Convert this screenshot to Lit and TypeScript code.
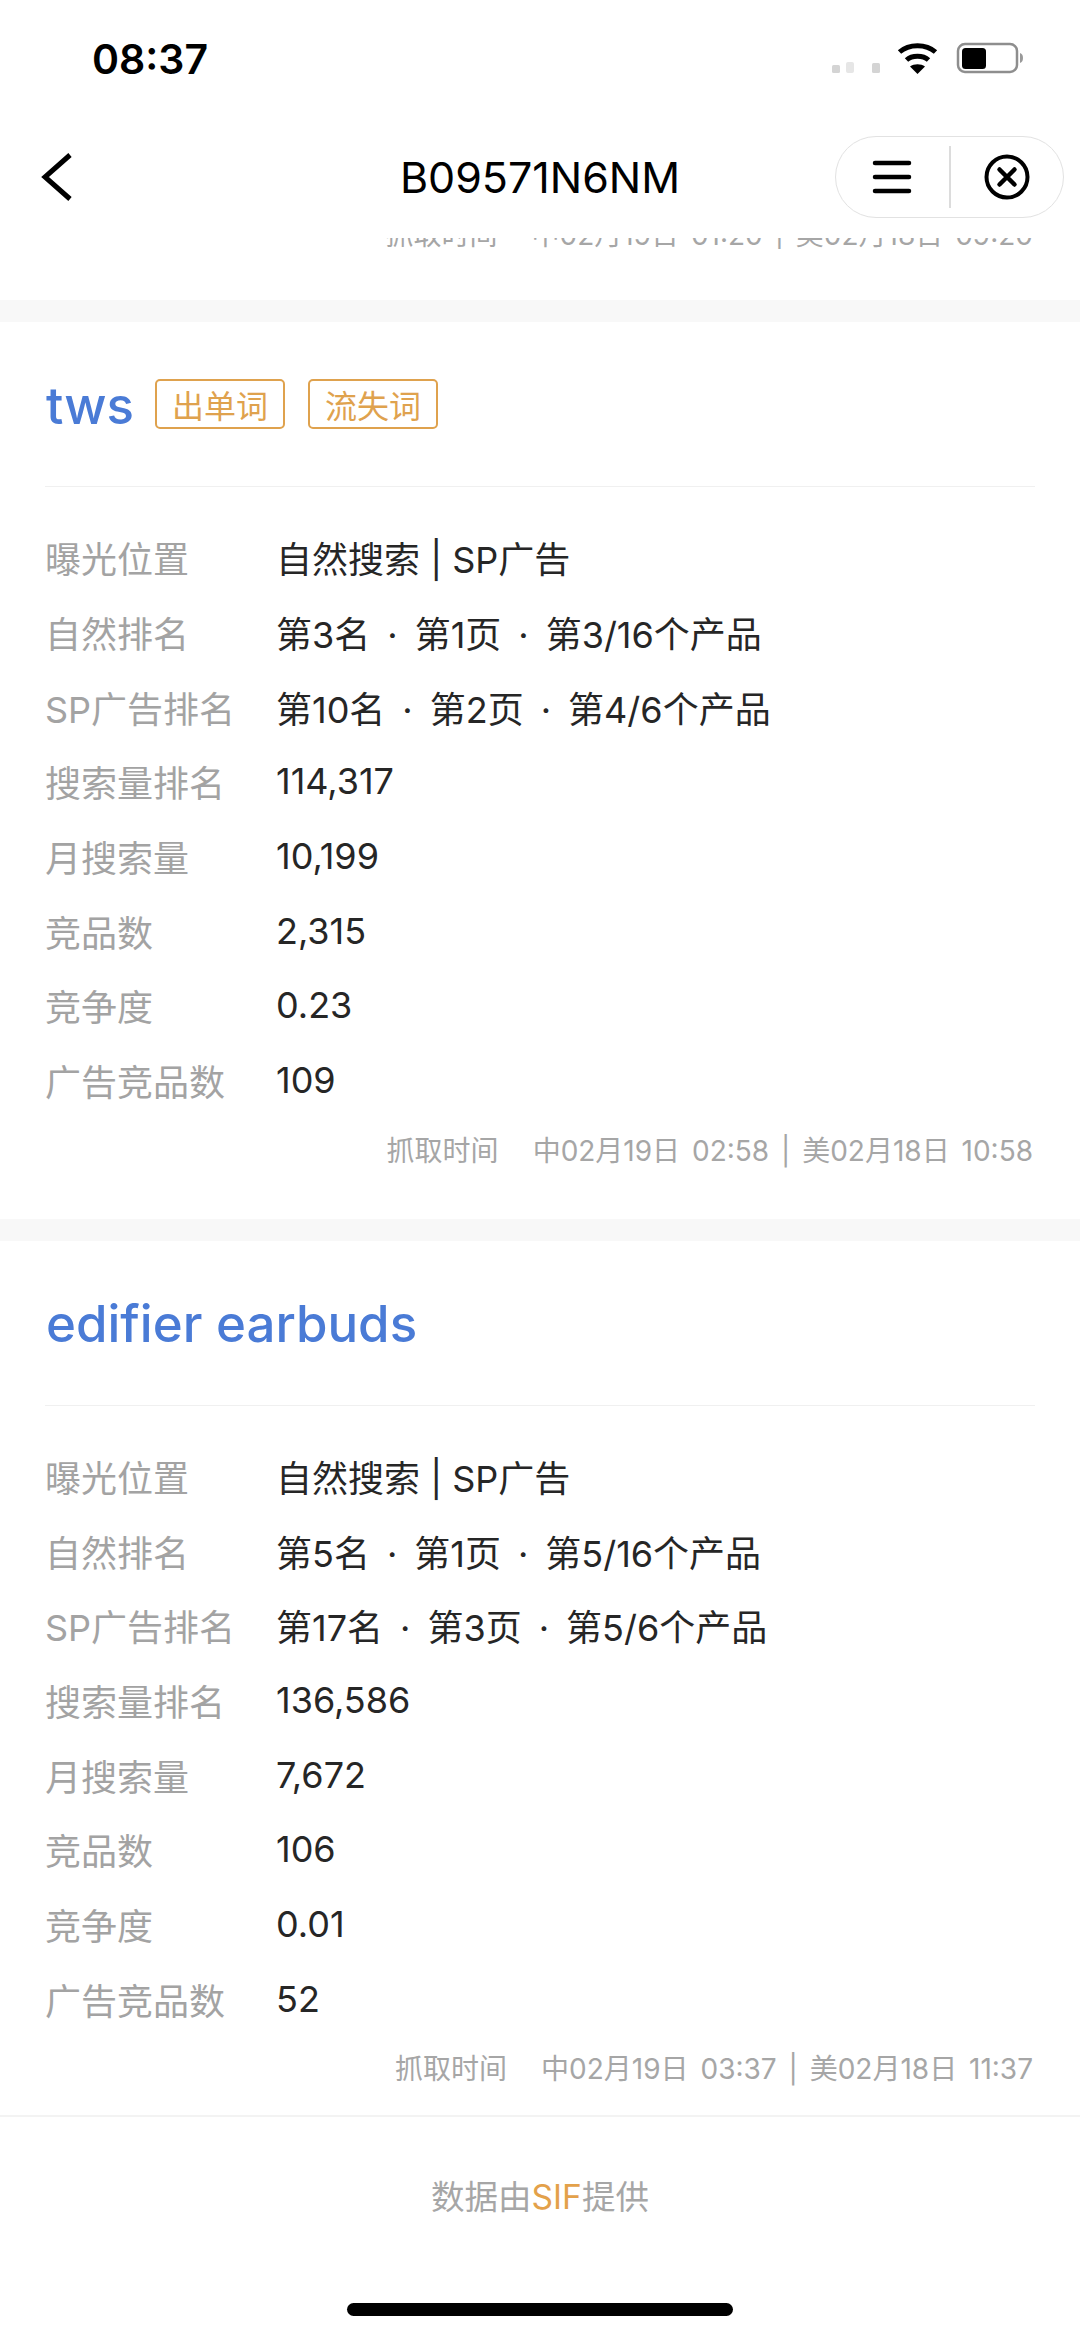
import { LitElement, html, css } from "lit";
import { customElement } from "lit/decorators.js";

type Card = {
  title: string;
  tags: string[];
  rows: [string, string][];
  time: string;
};

const cards: Card[] = [
  {
    title: "tws",
    tags: ["出单词", "流失词"],
    rows: [
      ["曝光位置", "自然搜索 | SP广告"],
      ["自然排名", "第3名 · 第1页 · 第3/16个产品"],
      ["SP广告排名", "第10名 · 第2页 · 第4/6个产品"],
      ["搜索量排名", "114,317"],
      ["月搜索量", "10,199"],
      ["竞品数", "2,315"],
      ["竞争度", "0.23"],
      ["广告竞品数", "109"],
    ],
    time: "中02月19日 02:58 | 美02月18日 10:58",
  },
  {
    title: "edifier earbuds",
    tags: [],
    rows: [
      ["曝光位置", "自然搜索 | SP广告"],
      ["自然排名", "第5名 · 第1页 · 第5/16个产品"],
      ["SP广告排名", "第17名 · 第3页 · 第5/6个产品"],
      ["搜索量排名", "136,586"],
      ["月搜索量", "7,672"],
      ["竞品数", "106"],
      ["竞争度", "0.01"],
      ["广告竞品数", "52"],
    ],
    time: "中02月19日 03:37 | 美02月18日 11:37",
  },
];

@customElement("app-root")
export class AppRoot extends LitElement {
  static styles = css`
    :host {
      display: block;
      width: 1080px;
      height: 2337px;
      background: #fff;
      font-family: Inter, "Noto Sans CJK SC", sans-serif;
      color: #1f1f1f;
    }
    .page {
      height: 2337px;
      display: flex;
      flex-direction: column;
      overflow: hidden;
    }
    .status {
      height: 118px;
      flex: none;
      display: flex;
      align-items: center;
      justify-content: space-between;
      padding: 0 50px 0 92px;
    }
    .clock {
      font-size: 41px;
      font-weight: 600;
      color: #000;
    }
    .status-icons {
      display: flex;
      align-items: center;
    }
    .nav {
      height: 118px;
      flex: none;
      display: flex;
      align-items: center;
      justify-content: center;
      position: relative;
    }
    .back {
      position: absolute;
      left: 41px;
      top: 35px;
    }
    .nav-title {
      font-size: 43px;
      color: #000;
    }
    .capsule {
      position: absolute;
      left: 835px;
      top: 18px;
      width: 229px;
      height: 82px;
      box-sizing: border-box;
      border: 1.5px solid #e2e2e2;
      border-radius: 41px;
      display: flex;
      align-items: center;
    }
    .cap-part {
      flex: 1;
      display: flex;
      align-items: center;
      justify-content: center;
      height: 62px;
    }
    .cap-part + .cap-part {
      border-left: 2px solid #dcdcdc;
    }
    .scroll {
      flex: 1;
      min-height: 0;
      overflow: hidden;
    }
    .clip {
      margin-top: 2px;
      height: 11px;
      overflow: hidden;
      display: flex;
      align-items: flex-end;
      justify-content: flex-end;
      padding-right: 47px;
    }
    .clip .time {
      padding: 0;
      flex: none;
    }
    .clip-gap {
      height: 51px;
    }
    .band {
      height: 22px;
      background: #f8f8f8;
    }
    .head {
      height: 165px;
      box-sizing: border-box;
      display: flex;
      align-items: center;
      margin: 0 45px;
      border-bottom: 1.5px solid #f0f0f0;
    }
    .title {
      font-size: 51px;
      font-weight: 500;
      color: #4a7bd6;
      margin: 2px 0 0 1px;
    }
    .tags {
      display: flex;
      gap: 23px;
      margin-left: 21px;
    }
    .tag {
      box-sizing: border-box;
      width: 130px;
      height: 50px;
      border: 2px solid #dfa24e;
      border-radius: 5px;
      color: #dfa24e;
      font-size: 32px;
      display: flex;
      align-items: center;
      justify-content: center;
    }
    .rows {
      padding: 33px 45px 0;
    }
    .row {
      height: 74.7px;
      display: flex;
      align-items: center;
      font-size: 36px;
    }
    .label {
      width: 231px;
      flex: none;
      color: #a3a3a3;
    }
    .value {
      color: #262626;
    }
    .dot {
      margin: 0 17px;
    }
    .time {
      display: flex;
      justify-content: flex-end;
      gap: 34px;
      color: #a6a6a6;
      font-size: 28px;
      line-height: 28px;
      word-spacing: 4px;
      padding: 19px 47px 54px 0;
      white-space: nowrap;
    }
    .footer {
      flex: none;
      height: 222px;
      box-sizing: border-box;
      border-top: 2px solid #f3f3f3;
      display: flex;
      flex-direction: column;
      align-items: center;
      position: relative;
    }
    .credit {
      margin-top: 53px;
      font-size: 33.5px;
      color: #a6a6a6;
    }
    .credit b {
      font-weight: 400;
      color: #e3a14a;
    }
    .home {
      position: absolute;
      left: 347px;
      top: 186px;
      width: 386px;
      height: 13px;
      border-radius: 7px;
      background: #000;
    }
  `;

  private renderValue(v: string) {
    const parts = v.split(" · ");
    return parts.map((p, i) =>
      i === 0 ? p : html`<span class="dot">·</span>${p}`
    );
  }

  private renderTime(t: string) {
    return html`<div class="time"><span>抓取时间</span><span>${t}</span></div>`;
  }

  private renderCard(c: Card) {
    return html`
      <div class="band"></div>
      <section>
        <div class="head">
          <span class="title">${c.title}</span>
          ${c.tags.length
            ? html`<div class="tags">${c.tags.map((t) => html`<span class="tag">${t}</span>`)}</div>`
            : null}
        </div>
        <div class="rows">
          ${c.rows.map(
            ([k, v]) => html`<div class="row">
              <span class="label">${k}</span>
              <span class="value">${this.renderValue(v)}</span>
            </div>`
          )}
        </div>
        ${this.renderTime(c.time)}
      </section>
    `;
  }

  render() {
    return html`
      <div class="page">
        <div class="status">
          <span class="clock">08:37</span>
          <div class="status-icons">
            <svg width="200" height="40" viewBox="0 0 200 40">
              <rect x="2" y="26" width="8" height="8" rx="1.5" fill="#d4d4d4"></rect>
              <rect x="16" y="23" width="8" height="11" rx="2" fill="#e6e6e6"></rect>
              <rect x="42" y="24" width="8" height="10" rx="1.5" fill="#d4d4d4"></rect>
              <g fill="none" stroke="#000" stroke-width="5">
                <path d="M69.500 13 C79 4.500 96 4.500 105.500 13"></path>
                <path d="M76.500 21 C82 16 93 16 98.500 21"></path>
              </g>
              <path d="M87.500 35 L80 27.500 C84 24.500 91 24.500 95 27.500 Z" fill="#000"></path>
              <rect x="128" y="5" width="59" height="28" rx="7" fill="#fff" stroke="#8e8e8e" stroke-width="2.500"></rect>
              <rect x="132" y="9" width="24" height="21" rx="3.500" fill="#000"></rect>
              <path d="M190 14 C194 15 194 23 190 24 Z" fill="#999"></path>
            </svg>
          </div>
        </div>
        <div class="nav">
          <svg class="back" width="32" height="48" viewBox="0 0 32 48">
            <path d="M29 2 L4 24 L29 46" fill="none" stroke="#000" stroke-width="5"></path>
          </svg>
          <span class="nav-title">B09571N6NM</span>
          <div class="capsule">
            <div class="cap-part">
              <svg width="40" height="34" viewBox="0 0 40 34">
                <g stroke="#000" stroke-width="4.500" stroke-linecap="round">
                  <path d="M3 3 H37"></path>
                  <path d="M3 17 H37"></path>
                  <path d="M3 31 H37"></path>
                </g>
              </svg>
            </div>
            <div class="cap-part">
              <svg width="46" height="46" viewBox="0 0 46 46">
                <circle cx="23" cy="23" r="20.500" fill="none" stroke="#000" stroke-width="4"></circle>
                <path d="M15.500 15.500 L30.500 30.500 M30.500 15.500 L15.500 30.500" stroke="#000" stroke-width="4.500" stroke-linecap="round"></path>
              </svg>
            </div>
          </div>
        </div>
        <div class="scroll">
          <div class="clip">
            <div class="time"><span>抓取时间</span><span>中02月19日 01:20 | 美02月18日 09:20</span></div>
          </div>
          <div class="clip-gap"></div>
          ${cards.map((c) => this.renderCard(c))}
        </div>
        <div class="footer">
          <div class="credit">数据由<b>SIF</b>提供</div>
          <div class="home"></div>
        </div>
      </div>
    `;
  }
}
